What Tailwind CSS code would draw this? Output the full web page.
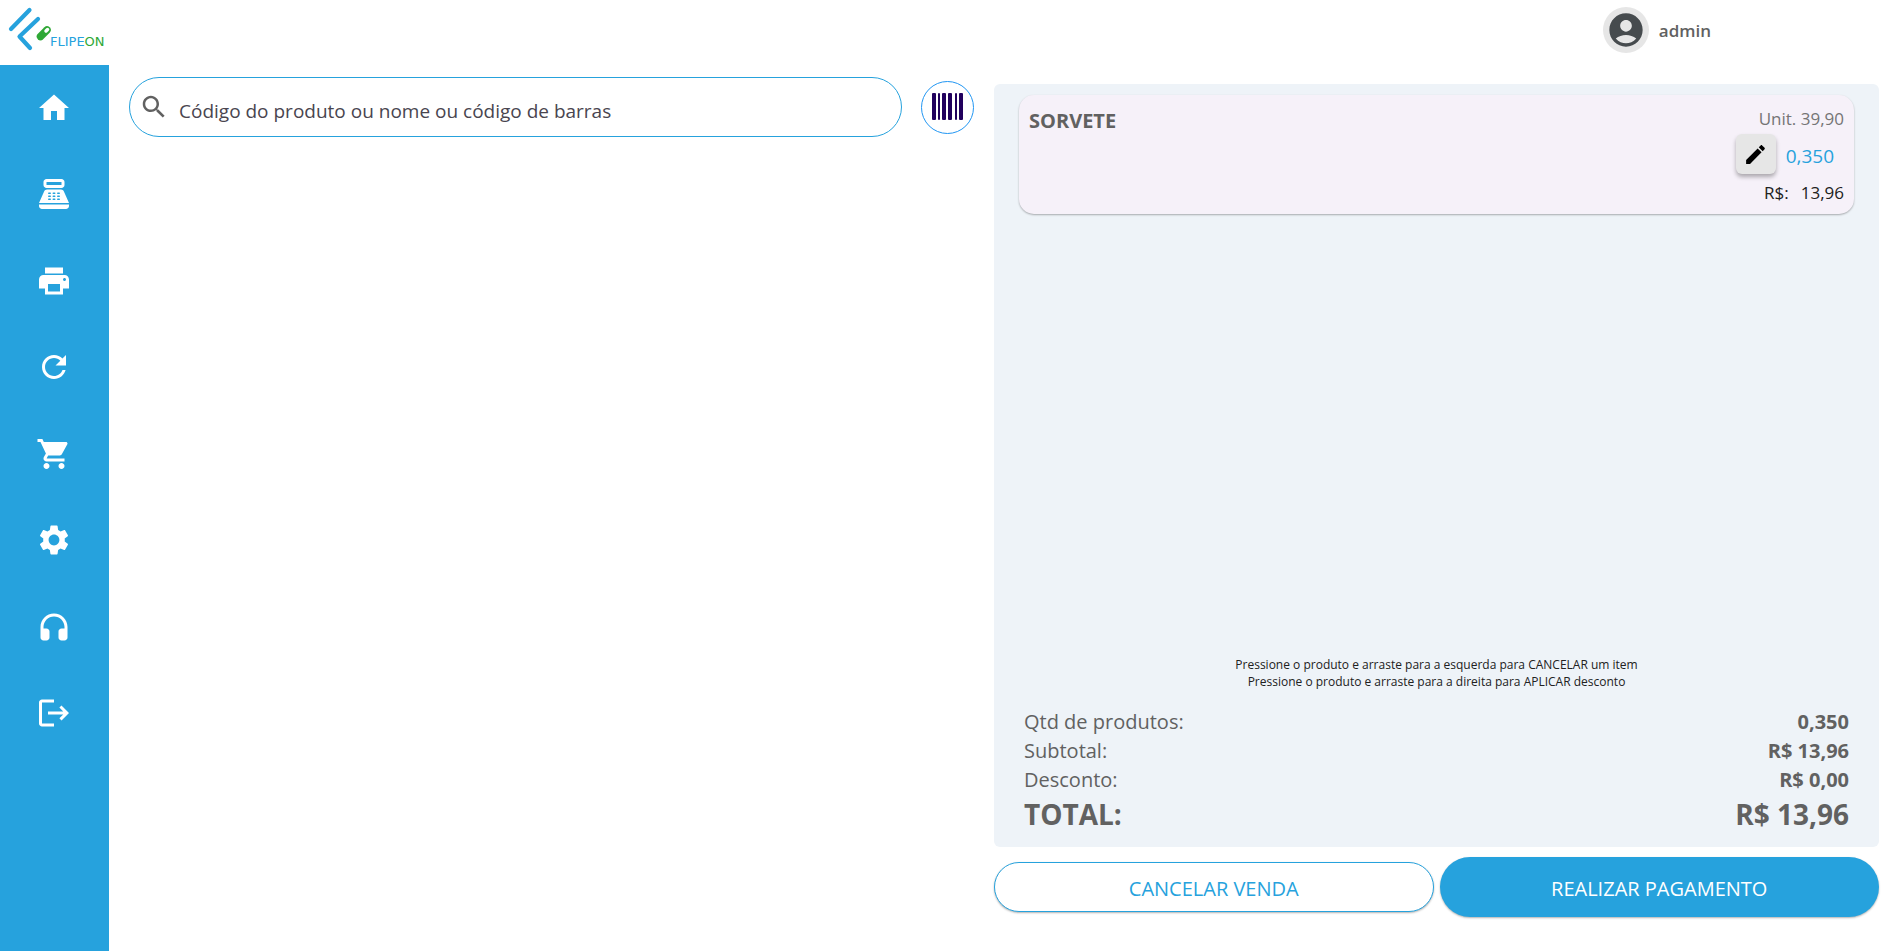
<!DOCTYPE html>
<html lang="pt-BR">
<head>
    <meta charset="UTF-8">
    <meta name="viewport" content="width=device-width, initial-scale=1.0">
    <title>FlipeOn - PDV</title>
    <script src="https://cdn.jsdelivr.net/npm/@tailwindcss/browser@4"></script>
</head>
<body class="flex min-h-screen flex-col bg-white font-['Open_Sans',sans-serif] text-[#616161]">

<header class="flex h-[65px] items-start justify-between">
    <a href="#" aria-label="FlipeOn">
        <svg class="h-[60px] w-[120px]" viewBox="0 0 120 60" fill="none" stroke-linecap="round" stroke-linejoin="round">
            <path d="M11 29 29.500 10M38 19 19.500 36.500 30 48" stroke="#26a2dd" stroke-width="4.200"/>
            <path d="M40.500 36.500 47 30" stroke="#2fa836" stroke-width="7.500"/>
            <path d="M46 31 47.500 29.500" stroke="#fff" stroke-width="3.500"/>
            <text x="50" y="46" font-family="DejaVu Sans, sans-serif" font-size="13" fill="#26a2dd">FLIPE<tspan fill="#2fa836">ON</tspan></text>
        </svg>
    </a>
    <button type="button" class="mt-[7px] mr-[187px] flex items-center gap-[10px] text-[17px] font-semibold">
        <span class="flex size-[46px] items-center justify-center rounded-full bg-[#e6e6e6]">
            <svg class="size-[40px]" viewBox="0 0 24 24" fill="#464b4e"><path d="M12 2C6.480 2 2 6.480 2 12s4.480 10 10 10 10-4.480 10-10S17.520 2 12 2zm0 4c1.930 0 3.500 1.570 3.500 3.500S13.930 13 12 13s-3.500-1.570-3.500-3.500S10.070 6 12 6zm0 14c-2.030 0-4.430-.820-6.140-2.880C7.550 15.800 9.680 15 12 15s4.450.800 6.140 2.120C16.430 19.180 14.030 20 12 20z"/></svg>
        </span>
        <span class="pt-0.5">admin</span>
    </button>
</header>

<div class="flex flex-1">
    <nav class="flex w-[109px] shrink-0 flex-col items-center justify-between bg-[#26a2dd] pt-[25px] pr-px pb-[220px] text-white">
        <a href="#" aria-label="Início"><svg class="size-[36px]" viewBox="0 0 24 24" fill="currentColor"><path d="M10 20v-6h4v6h5v-8h3L12 3 2 12h3v8z"/></svg></a>
        <a href="#" aria-label="Caixa"><svg class="size-[36px]" viewBox="0 0 24 24" fill="currentColor"><path fill-rule="evenodd" d="M17 2H7c-1.100 0-2 .900-2 2v2c0 1.100.900 2 2 2h10c1.100 0 2-.900 2-2V4c0-1.100-.900-2-2-2zm0 4H7V4h10v2zm3 16H4c-1.100 0-2-.900-2-2v-1h20v1c0 1.100-.900 2-2 2zM18.530 10.190C18.210 9.470 17.490 9 16.700 9H7.300c-.790 0-1.510.470-1.830 1.190L2 18h20l-3.470-7.810zM9.500 16h-1a.5.5 0 0 1 0-1h1a.5.5 0 0 1 0 1zm0-2h-1a.5.5 0 0 1 0-1h1a.5.5 0 0 1 0 1zm0-2h-1a.5.5 0 0 1 0-1h1a.5.5 0 0 1 0 1zm3 4h-1a.5.5 0 0 1 0-1h1a.5.5 0 0 1 0 1zm0-2h-1a.5.5 0 0 1 0-1h1a.5.5 0 0 1 0 1zm0-2h-1a.5.5 0 0 1 0-1h1a.5.5 0 0 1 0 1zm3 4h-1a.5.5 0 0 1 0-1h1a.5.5 0 0 1 0 1zm0-2h-1a.5.5 0 0 1 0-1h1a.5.5 0 0 1 0 1zm0-2h-1a.5.5 0 0 1 0-1h1a.5.5 0 0 1 0 1z"/></svg></a>
        <a href="#" aria-label="Imprimir"><svg class="size-[36px]" viewBox="0 0 24 24" fill="currentColor"><path d="M19 8H5c-1.660 0-3 1.340-3 3v6h4v4h12v-4h4v-6c0-1.660-1.340-3-3-3zm-3 11H8v-5h8v5zm3-7c-.550 0-1-.450-1-1s.450-1 1-1 1 .450 1 1-.450 1-1 1zm-1-9H6v4h12V3z"/></svg></a>
        <a href="#" aria-label="Atualizar"><svg class="size-[36px]" viewBox="0 0 24 24" fill="currentColor"><path d="M17.650 6.350C16.200 4.900 14.210 4 12 4c-4.420 0-7.990 3.580-7.990 8s3.570 8 7.990 8c3.730 0 6.840-2.550 7.730-6h-2.080c-.820 2.330-3.040 4-5.650 4-3.310 0-6-2.690-6-6s2.690-6 6-6c1.660 0 3.140.690 4.220 1.780L13 11h7V4l-2.350 2.350z"/></svg></a>
        <a href="#" aria-label="Vendas"><svg class="size-[36px]" viewBox="0 0 24 24" fill="currentColor"><path d="M7 18c-1.100 0-1.990.900-1.990 2S5.900 22 7 22s2-.900 2-2-.900-2-2-2zM1 2v2h2l3.600 7.590-1.350 2.450c-.160.280-.250.610-.250.960 0 1.100.900 2 2 2h12v-2H7.420c-.140 0-.250-.110-.250-.250l.030-.120.900-1.630h7.450c.750 0 1.410-.410 1.750-1.030l3.580-6.490c.080-.140.120-.310.120-.480 0-.550-.450-1-1-1H5.210l-.940-2H1zm16 16c-1.100 0-1.990.900-1.990 2s.890 2 1.990 2 2-.900 2-2-.900-2-2-2z"/></svg></a>
        <a href="#" aria-label="Configurações"><svg class="size-[36px]" viewBox="0 0 24 24" fill="currentColor"><path d="M19.140 12.940c.040-.3.060-.610.060-.940 0-.320-.020-.640-.070-.940l2.030-1.580c.180-.140.230-.410.120-.610l-1.920-3.320c-.120-.220-.370-.290-.590-.220l-2.390.960c-.5-.380-1.030-.7-1.620-.940l-.360-2.540c-.040-.240-.240-.410-.480-.410h-3.840c-.240 0-.430.170-.470.410l-.360 2.540c-.590.240-1.130.570-1.620.940l-2.390-.960c-.220-.080-.470 0-.590.220L2.740 8.870c-.120.210-.080.470.120.610l2.030 1.580c-.050.3-.090.630-.090.940s.020.640.070.940l-2.030 1.580c-.180.140-.230.410-.120.610l1.920 3.320c.120.220.370.290.590.220l2.390-.960c.5.380 1.030.7 1.620.940l.360 2.540c.050.240.240.410.480.410h3.840c.240 0 .440-.170.470-.410l.360-2.540c.590-.240 1.130-.560 1.620-.940l2.390.960c.220.080.470 0 .590-.220l1.920-3.320c.120-.220.070-.470-.120-.610l-2.010-1.580zM12 15.600c-1.980 0-3.600-1.620-3.600-3.600s1.620-3.600 3.600-3.600 3.600 1.620 3.600 3.600-1.620 3.600-3.600 3.600z"/></svg></a>
        <a href="#" aria-label="Suporte"><svg class="size-[36px]" viewBox="0 0 24 24" fill="currentColor"><path d="M12 3c-4.970 0-9 4.030-9 9v7c0 1.100.9 2 2 2h2c1.100 0 2-.9 2-2v-4c0-1.100-.9-2-2-2H5v-1c0-3.870 3.130-7 7-7s7 3.130 7 7v1h-2c-1.100 0-2 .9-2 2v4c0 1.100.9 2 2 2h2c1.100 0 2-.9 2-2v-7c0-4.970-4.030-9-9-9z"/></svg></a>
        <a href="#" aria-label="Sair"><svg class="size-[36px]" viewBox="0 0 24 24" fill="currentColor"><path d="M17 7l-1.410 1.410L18.170 11H8v2h10.170l-2.580 2.580L17 17l5-5zM4 5h8V3H4c-1.100 0-2 .9-2 2v14c0 1.100.9 2 2 2h8v-2H4V5z"/></svg></a>
    </nav>

    <main class="grid flex-1 grid-cols-[845fr_885fr] gap-5 pr-[19px] pl-5">
        <section class="flex items-start pt-3">
            <form class="flex flex-1 items-center gap-[19px]">
                <label class="flex h-[60px] flex-1 items-center gap-[10px] rounded-full border border-[#26a2dd] pr-6 pl-[9px]">
                    <svg class="size-[30px] shrink-0" viewBox="0 0 24 24" fill="#616161"><path d="M15.500 14h-.790l-.280-.270C15.410 12.590 16 11.110 16 9.500 16 5.910 13.090 3 9.500 3S3 5.910 3 9.500 5.910 16 9.500 16c1.610 0 3.090-.590 4.230-1.570l.270.280v.790l5 4.990L20.490 19l-4.990-5zm-6 0C7.010 14 5 11.990 5 9.500S7.010 5 9.500 5 14 7.010 14 9.500 11.990 14 9.500 14z"/></svg>
                    <input type="text" aria-label="Buscar produto" placeholder="Código do produto ou nome ou código de barras"
                           class="min-w-0 flex-1 pt-2 text-[19px] text-[#49454f] outline-none placeholder:text-[#49454f]">
                </label>
                <button type="button" aria-label="Ler código de barras" class="flex size-[53px] items-center justify-center rounded-full border border-[#2196f3] pb-0.5">
                    <svg class="h-[27px] w-[31px]" viewBox="0 0 31 27" fill="#21005d"><rect width="4" height="27" rx="1"/><rect x="6" width="2" height="27" rx="1"/><rect x="10" width="4" height="27" rx="1"/><rect x="16" width="4" height="27" rx="1"/><rect x="23" width="2" height="27" rx="1"/><rect x="27" width="4" height="27" rx="1"/></svg>
                </button>
            </form>
        </section>

        <section class="flex flex-col pt-[19px] pb-[34px]">
            <div class="flex flex-1 flex-col rounded-md bg-[#eef3f8] px-[25px] pt-[11px] pb-[13px]">
                <article class="flex justify-between rounded-[15px] bg-[#f6f1f9] px-[10px] pt-3 pb-[9px] shadow-[0_1px_2px_rgba(0,0,0,0.3)]">
                    <h2 class="text-[20px]/[28px] font-bold">SORVETE</h2>
                    <div class="flex flex-col items-end">
                        <p class="text-[17px]/[24px] text-[#757575]">Unit. 39,90</p>
                        <div class="mt-[3px] mr-[10px] flex items-center gap-[10px]">
                            <button type="button" aria-label="Editar quantidade" class="flex size-[40px] items-center justify-center rounded-md bg-[#e6e6e6] shadow-[0_3px_4px_rgba(0,0,0,0.3)]">
                                <svg class="size-[25px]" viewBox="0 0 24 24" fill="#000"><path d="M3 17.250V21h3.750L17.810 9.940l-3.750-3.750L3 17.250zM20.710 7.040c.390-.390.390-1.020 0-1.410l-2.340-2.340c-.390-.390-1.020-.390-1.410 0l-1.830 1.830 3.750 3.750 1.830-1.830z"/></svg>
                            </button>
                            <span class="pt-1 text-[19px]/[24px] text-[#26a2dd]">0,350</span>
                        </div>
                        <p class="mt-[7px] flex gap-3 text-[17px]/[24px] text-[#212121]"><span>R$:</span><span>13,96</span></p>
                    </div>
                </article>

                <p class="mt-auto mb-[17px] text-center text-[12px]/[17px] text-[#212121]">
                    Pressione o produto e arraste para a esquerda para CANCELAR um item<br>
                    Pressione o produto e arraste para a direita para APLICAR desconto
                </p>

                <dl class="px-[5px] text-[20px]/[29px]">
                    <div class="flex justify-between"><dt>Qtd de produtos:</dt><dd class="font-bold">0,350</dd></div>
                    <div class="flex justify-between"><dt>Subtotal:</dt><dd class="font-bold">R$ 13,96</dd></div>
                    <div class="flex justify-between"><dt>Desconto:</dt><dd class="font-bold">R$ 0,00</dd></div>
                    <div class="flex justify-between text-[28px]/[40px] font-bold"><dt>TOTAL:</dt><dd>R$ 13,96</dd></div>
                </dl>
            </div>

            <div class="mt-[10px] grid grid-cols-2 items-center gap-[6px] text-[20px]">
                <button type="button" class="h-[50px] rounded-full border border-[#26a2dd] bg-white pt-[3px] text-[#26a2dd] shadow-[0_1px_2px_rgba(0,0,0,0.3)]">CANCELAR VENDA</button>
                <button type="button" class="h-[60px] rounded-full bg-[#26a2dd] pt-[3px] text-white shadow-[0_1px_2px_rgba(0,0,0,0.3)]">REALIZAR PAGAMENTO</button>
            </div>
        </section>
    </main>
</div>

</body>
</html>
